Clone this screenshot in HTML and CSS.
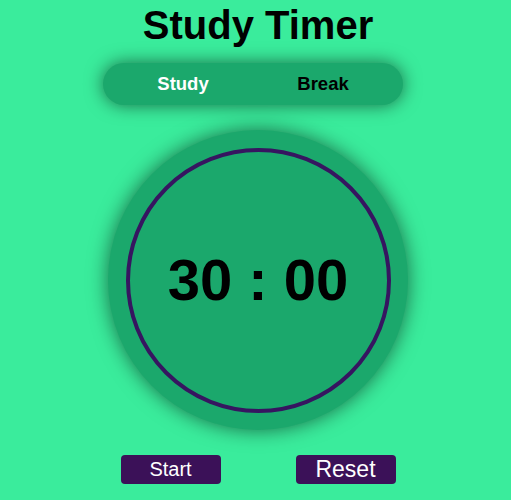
FILE: index.html
```html
<!DOCTYPE html>
<html lang="en">
<head>
<meta charset="utf-8">
<title>Study Timer</title>
<link rel="stylesheet" href="styles.css">
</head>
<body>
<main class="app">
  <h1 class="title">Study Timer</h1>
  <div class="toggle">
    <span class="tab tab-active">Study</span>
    <span class="tab">Break</span>
  </div>
  <div class="dial">
    <div class="ring">
      <span class="time">30 : 00</span>
    </div>
  </div>
  <div class="controls">
    <button class="btn btn-start">Start</button>
    <button class="btn btn-reset">Reset</button>
  </div>
</main>
</body>
</html>
```
FILE: styles.css
```css
html, body {
  margin: 0;
  padding: 0;
}
body {
  background: #3aec9c;
  font-family: "Liberation Sans", Arial, sans-serif;
  color: #000;
}
.app {
  display: flex;
  flex-direction: column;
  align-items: center;
  padding-left: 5px;
}
.title {
  margin: 2px 0 15px;
  font-size: 40px;
  line-height: 46px;
  font-weight: bold;
}
.toggle {
  width: 300px;
  height: 42px;
  border-radius: 21px;
  background: #1ba86c;
  box-shadow: 0 0 18px rgba(0, 0, 0, 0.55);
  display: flex;
  justify-content: center;
  align-items: center;
  gap: 20px;
  margin-right: 10px;
}
.tab {
  width: 120px;
  text-align: center;
  font-size: 18.5px;
  font-weight: bold;
  color: #000;
}
.tab-active {
  color: #fff;
}
.dial {
  margin-top: 25px;
  width: 300px;
  height: 300px;
  border-radius: 50%;
  background: #1ba86c;
  box-shadow: 0 0 20px rgba(0, 0, 0, 0.55);
  display: flex;
  justify-content: center;
  align-items: center;
}
.ring {
  width: 265px;
  height: 265px;
  box-sizing: border-box;
  border: 4px solid #361560;
  border-radius: 50%;
  display: flex;
  justify-content: center;
  align-items: center;
}
.time {
  font-size: 58px;
  font-weight: bold;
  line-height: 1;
}
.controls {
  margin-top: 25px;
  display: flex;
  gap: 75px;
}
.btn {
  width: 100px;
  height: 29px;
  padding: 0;
  border: none;
  border-radius: 4px;
  background: #3b1158;
  color: #fff;
  font-family: "Liberation Sans", Arial, sans-serif;
  line-height: 29px;
}
.btn-start {
  font-size: 20px;
}
.btn-reset {
  font-size: 23px;
}
```
